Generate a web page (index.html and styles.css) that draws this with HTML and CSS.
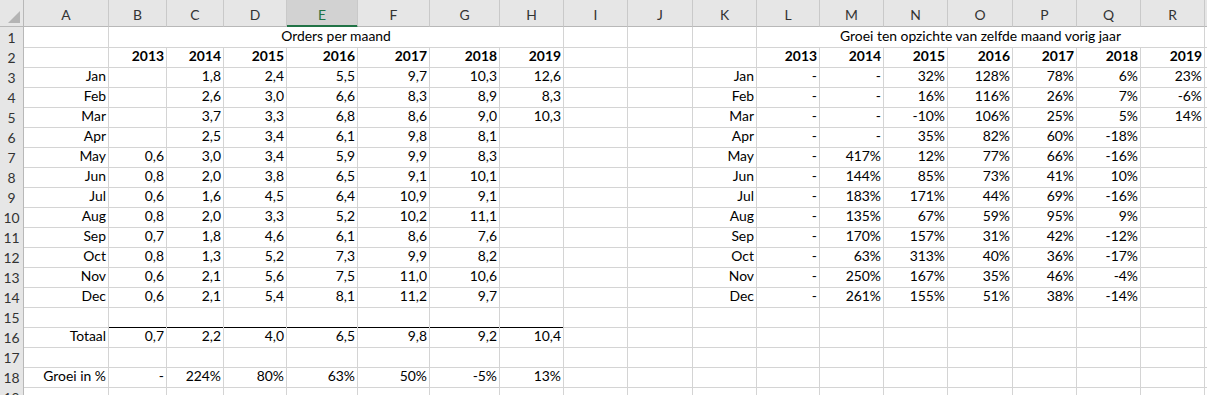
FILE: index.html
```html
<!DOCTYPE html>
<html lang="nl">
<head>
<meta charset="utf-8">
<title>Orders per maand</title>
<link rel="stylesheet" href="styles.css">
</head>
<body>
<div class="sheet">
  <div class="hdr">
    <div class="corner"><span class="tri"></span></div>
    <div>A</div><div>B</div><div>C</div><div>D</div><div class="sel">E</div><div>F</div><div>G</div><div>H</div><div>I</div><div>J</div><div>K</div><div>L</div><div>M</div><div>N</div><div>O</div><div>P</div><div>Q</div><div>R</div><div class="x"></div>
  </div>

  <div class="row"><div class="rh">1</div><div></div><div class="title">Orders per maand</div><div></div><div></div><div></div><div class="title">Groei ten opzichte van zelfde maand vorig jaar</div><div class="x"></div></div>

  <div class="row b"><div class="rh">2</div><div></div><div>2013</div><div>2014</div><div>2015</div><div>2016</div><div>2017</div><div>2018</div><div>2019</div><div></div><div></div><div></div><div>2013</div><div>2014</div><div>2015</div><div>2016</div><div>2017</div><div>2018</div><div>2019</div><div class="x"></div></div>

  <div class="row"><div class="rh">3</div><div>Jan</div><div></div><div>1,8</div><div>2,4</div><div>5,5</div><div>9,7</div><div>10,3</div><div>12,6</div><div></div><div></div><div>Jan</div><div>-</div><div>-</div><div>32%</div><div>128%</div><div>78%</div><div>6%</div><div>23%</div><div class="x"></div></div>

  <div class="row"><div class="rh">4</div><div>Feb</div><div></div><div>2,6</div><div>3,0</div><div>6,6</div><div>8,3</div><div>8,9</div><div>8,3</div><div></div><div></div><div>Feb</div><div>-</div><div>-</div><div>16%</div><div>116%</div><div>26%</div><div>7%</div><div>-6%</div><div class="x"></div></div>

  <div class="row"><div class="rh">5</div><div>Mar</div><div></div><div>3,7</div><div>3,3</div><div>6,8</div><div>8,6</div><div>9,0</div><div>10,3</div><div></div><div></div><div>Mar</div><div>-</div><div>-</div><div>-10%</div><div>106%</div><div>25%</div><div>5%</div><div>14%</div><div class="x"></div></div>

  <div class="row"><div class="rh">6</div><div>Apr</div><div></div><div>2,5</div><div>3,4</div><div>6,1</div><div>9,8</div><div>8,1</div><div></div><div></div><div></div><div>Apr</div><div>-</div><div>-</div><div>35%</div><div>82%</div><div>60%</div><div>-18%</div><div></div><div class="x"></div></div>

  <div class="row"><div class="rh">7</div><div>May</div><div>0,6</div><div>3,0</div><div>3,4</div><div>5,9</div><div>9,9</div><div>8,3</div><div></div><div></div><div></div><div>May</div><div>-</div><div>417%</div><div>12%</div><div>77%</div><div>66%</div><div>-16%</div><div></div><div class="x"></div></div>

  <div class="row"><div class="rh">8</div><div>Jun</div><div>0,8</div><div>2,0</div><div>3,8</div><div>6,5</div><div>9,1</div><div>10,1</div><div></div><div></div><div></div><div>Jun</div><div>-</div><div>144%</div><div>85%</div><div>73%</div><div>41%</div><div>10%</div><div></div><div class="x"></div></div>

  <div class="row"><div class="rh">9</div><div>Jul</div><div>0,6</div><div>1,6</div><div>4,5</div><div>6,4</div><div>10,9</div><div>9,1</div><div></div><div></div><div></div><div>Jul</div><div>-</div><div>183%</div><div>171%</div><div>44%</div><div>69%</div><div>-16%</div><div></div><div class="x"></div></div>

  <div class="row"><div class="rh">10</div><div>Aug</div><div>0,8</div><div>2,0</div><div>3,3</div><div>5,2</div><div>10,2</div><div>11,1</div><div></div><div></div><div></div><div>Aug</div><div>-</div><div>135%</div><div>67%</div><div>59%</div><div>95%</div><div>9%</div><div></div><div class="x"></div></div>

  <div class="row"><div class="rh">11</div><div>Sep</div><div>0,7</div><div>1,8</div><div>4,6</div><div>6,1</div><div>8,6</div><div>7,6</div><div></div><div></div><div></div><div>Sep</div><div>-</div><div>170%</div><div>157%</div><div>31%</div><div>42%</div><div>-12%</div><div></div><div class="x"></div></div>

  <div class="row"><div class="rh">12</div><div>Oct</div><div>0,8</div><div>1,3</div><div>5,2</div><div>7,3</div><div>9,9</div><div>8,2</div><div></div><div></div><div></div><div>Oct</div><div>-</div><div>63%</div><div>313%</div><div>40%</div><div>36%</div><div>-17%</div><div></div><div class="x"></div></div>

  <div class="row"><div class="rh">13</div><div>Nov</div><div>0,6</div><div>2,1</div><div>5,6</div><div>7,5</div><div>11,0</div><div>10,6</div><div></div><div></div><div></div><div>Nov</div><div>-</div><div>250%</div><div>167%</div><div>35%</div><div>46%</div><div>-4%</div><div></div><div class="x"></div></div>

  <div class="row"><div class="rh">14</div><div>Dec</div><div>0,6</div><div>2,1</div><div>5,4</div><div>8,1</div><div>11,2</div><div>9,7</div><div></div><div></div><div></div><div>Dec</div><div>-</div><div>261%</div><div>155%</div><div>51%</div><div>38%</div><div>-14%</div><div></div><div class="x"></div></div>

  <div class="row"><div class="rh">15</div><div></div><div class="tl"></div><div class="tl"></div><div class="tl"></div><div class="tl"></div><div class="tl"></div><div class="tl"></div><div class="tl"></div><div></div><div></div><div></div><div></div><div></div><div></div><div></div><div></div><div></div><div></div><div class="x"></div></div>

  <div class="row"><div class="rh">16</div><div>Totaal</div><div>0,7</div><div>2,2</div><div>4,0</div><div>6,5</div><div>9,8</div><div>9,2</div><div>10,4</div><div></div><div></div><div></div><div></div><div></div><div></div><div></div><div></div><div></div><div></div><div class="x"></div></div>

  <div class="row"><div class="rh">17</div><div></div><div></div><div></div><div></div><div></div><div></div><div></div><div></div><div></div><div></div><div></div><div></div><div></div><div></div><div></div><div></div><div></div><div></div><div class="x"></div></div>

  <div class="row"><div class="rh">18</div><div>Groei in %</div><div>-</div><div>224%</div><div>80%</div><div>63%</div><div>50%</div><div>-5%</div><div>13%</div><div></div><div></div><div></div><div></div><div></div><div></div><div></div><div></div><div></div><div></div><div class="x"></div></div>

  <div class="row"><div class="rh">19</div><div></div><div></div><div></div><div></div><div></div><div></div><div></div><div></div><div></div><div></div><div></div><div></div><div></div><div></div><div></div><div></div><div></div><div></div><div class="x"></div></div>
</div>
</body>
</html>
```

FILE: styles.css
```css
* {
  box-sizing: border-box;
  margin: 0;
  padding: 0;
}

html, body {
  background: #ffffff;
}

body {
  margin: 0;
  overflow: hidden;
  font-family: Lato, "Liberation Sans", sans-serif;
  font-size: 13.9px;
  color: #000;
}

.sheet {
  width: 1207px;
  height: 395px;
  overflow: hidden;
}

.hdr,
.row {
  display: grid;
  grid-template-columns: 24px 85px 58px 57px 63px 71px 72px 70px 64px 64px 65px 64px 63px 64px 64px 65px 64px 64px 64px 1fr;
}

/* column header bar */
.hdr {
  height: 27px;
  background: #e6e6e6;
}

.hdr > div {
  border-right: 1px solid #c9c9c9;
  border-bottom: 1px solid #b8b8b8;
  text-align: center;
  color: #333;
  padding-top: 6px;
  line-height: 18px;
}

.hdr > .sel {
  background: #d2d2d2;
  color: #217346;
  border-bottom: 1px solid #217346;
  box-shadow: inset 0 -1px 0 #217346;
}

.hdr > .corner {
  position: relative;
  border-right-color: #b8b8b8;
}

.tri {
  position: absolute;
  right: 3px;
  bottom: 3px;
  width: 0;
  height: 0;
  border-left: 12px solid transparent;
  border-bottom: 12px solid #b4b4b4;
}

.hdr > .x {
  border-right: none;
}

/* rows */
.row {
  height: 20px;
}

.row > div {
  border-right: 1px solid #d4d4d4;
  border-bottom: 1px solid #d4d4d4;
  text-align: right;
  padding-right: 2px;
  line-height: 18px;
  white-space: nowrap;
}

.row > .rh {
  background: #e6e6e6;
  border-right-color: #b8b8b8;
  border-bottom-color: #d0d0d0;
  text-align: center;
  padding: 2px 0 0 0;
  color: #333;
}

.row > .title {
  grid-column: span 7;
  text-align: center;
  padding-right: 0;
}

.row > .tl {
  border-bottom-color: #000;
}

.row > .x {
  border-right: none;
}

.b > div {
  font-weight: 700;
}

.b > .rh {
  font-weight: 400;
}
```
